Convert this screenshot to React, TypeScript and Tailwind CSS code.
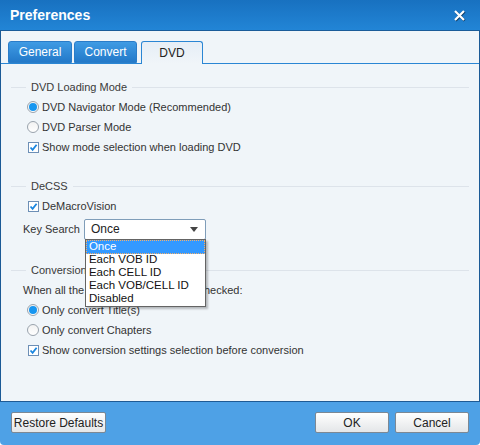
import { ReactNode } from "react";

function GroupHeader({ title }: { title: string }) {
  return (
    <div className="flex h-[20px] items-center pl-[10px] pr-[10px]">
      <div className="h-px w-[15px] bg-[#dde3ea]" />
      <span className="px-[5px] text-[#3a3a3a]">{title}</span>
      <div className="h-px flex-1 bg-[#dde3ea]" />
    </div>
  );
}

function Radio({ checked, children }: { checked?: boolean; children: ReactNode }) {
  return (
    <div className="flex h-[20px] items-center pl-[26px]">
      <span className="flex h-[12px] w-[12px] items-center justify-center rounded-full border border-[#9aa3ad] bg-gradient-to-b from-[#f2f2f2] to-white">
        {checked && <span className="h-[8px] w-[8px] rounded-full bg-[#1796f0]" />}
      </span>
      <span className="ml-[3px]">{children}</span>
    </div>
  );
}

function Check({ children }: { children: ReactNode }) {
  return (
    <div className="flex h-[20px] items-center pl-[27px]">
      <span className="flex h-[11px] w-[11px] items-center justify-center border border-[#6d8fb6] bg-white">
        <svg width="9" height="9" viewBox="0 0 9 9">
          <path d="M1.5 4.5 L3.6 6.8 L7.6 1.8" fill="none" stroke="#1a86e0" strokeWidth="1.8" />
        </svg>
      </span>
      <span className="ml-[3px]">{children}</span>
    </div>
  );
}

function Button({ children, className }: { children: ReactNode; className: string }) {
  return (
    <div
      className={`flex h-[21px] items-center justify-center rounded-[2px] border border-[#7c8894] bg-gradient-to-b from-white to-[#e4e6e8] text-[12px] text-[#222] ${className}`}
    >
      {children}
    </div>
  );
}

export default function App() {
  return (
    <div
      className="flex h-[445px] w-[480px] flex-col overflow-hidden text-[11px] text-[#333]"
      style={{ fontFamily: '"Liberation Sans", Arial, sans-serif' }}
    >
      {/* Title bar */}
      <div className="flex h-[31px] items-center justify-between border-b border-[#1a5c99] bg-gradient-to-b from-[#1871c0] to-[#2285d6] pl-[10px] pr-[14px]">
        <span className="text-[14px] font-bold text-white">Preferences</span>
        <svg width="13" height="13" viewBox="0 0 13 13">
          <path d="M2 2 L11 11 M11 2 L2 11" stroke="#0c3b66" strokeWidth="2.6" transform="translate(0.6 0.6)" />
          <path d="M2 2 L11 11 M11 2 L2 11" stroke="white" strokeWidth="2.2" />
        </svg>
      </div>

      {/* Body */}
      <div className="flex flex-1 flex-col border-x border-[#1b5a96] bg-[#f0f5f9]">
        {/* Tabs */}
        <div className="flex items-end border-b border-[#2a86d4] pl-[7px] pt-[10px] text-[12px]">
          <div className="flex h-[22px] w-[64px] items-center justify-center rounded-t-[3px] border border-[#2a7cc8] bg-gradient-to-b from-[#3f9be4] to-[#2379c9] text-white">
            General
          </div>
          <div className="ml-[2px] flex h-[22px] w-[63px] items-center justify-center rounded-t-[3px] border border-[#2a7cc8] bg-gradient-to-b from-[#3f9be4] to-[#2379c9] text-white">
            Convert
          </div>
          <div className="-mb-px ml-[4px] flex h-[23px] w-[62px] items-center justify-center rounded-t-[3px] border border-b-0 border-[#2a86d4] bg-gradient-to-b from-[#e6eef6] to-[#f0f5f9] text-[#222]">
            DVD
          </div>
        </div>

        {/* Content */}
        <div className="flex flex-1 flex-col pt-[13px]">
          <GroupHeader title="DVD Loading Mode" />
          <Radio checked>DVD Navigator Mode (Recommended)</Radio>
          <Radio>DVD Parser Mode</Radio>
          <Check>Show mode selection when loading DVD</Check>

          <div className="mt-[19px]">
            <GroupHeader title="DeCSS" />
          </div>
          <Check>DeMacroVision</Check>
          <div className="mt-[3px] flex h-[20px] items-center pl-[22px]">
            <span>Key Search</span>
            <div className="relative ml-[4px]">
              <div className="flex h-[21px] w-[122px] items-center justify-between rounded-[2px] border border-[#7f9db9] bg-white pl-[6px] pr-[7px] text-[12px] text-[#222]">
                <span>Once</span>
                <svg width="8" height="5" viewBox="0 0 8 5">
                  <path d="M0 0 L8 0 L4 5 Z" fill="#444" />
                </svg>
              </div>
              <div className="absolute left-px top-[20px] z-10 w-[121px] border border-[#646464] bg-white text-[11.5px] text-[#111] shadow-[2px_2px_2px_rgba(0,0,0,0.25)]">
                <div className="flex h-[14px] items-center border border-dotted border-[#f5b06a] bg-[#3399ff] pl-[2px] text-white">
                  Once
                </div>
                <div className="flex h-[13px] items-center pl-[3px]">Each VOB ID</div>
                <div className="flex h-[13px] items-center pl-[3px]">Each CELL ID</div>
                <div className="flex h-[13px] items-center pl-[3px]">Each VOB/CELL ID</div>
                <div className="flex h-[13px] items-center pl-[3px]">Disabled</div>
              </div>
            </div>
          </div>

          <div className="mt-[21px]">
            <GroupHeader title="Conversion Settings" />
          </div>
          <div className="flex h-[20px] items-center pl-[22px]">
            When all the titles and chapters are checked:
          </div>
          <Radio checked>Only convert Title(s)</Radio>
          <Radio>Only convert Chapters</Radio>
          <Check>Show conversion settings selection before conversion</Check>
        </div>
      </div>

      {/* Bottom bar */}
      <div className="flex h-[44px] items-center justify-between rounded-b-[4px] border-t border-[#1f5a94] bg-[#4ea1e6] px-[11px] pb-[2px]">
        <Button className="w-[95px]">Restore Defaults</Button>
        <div className="flex gap-[6px]">
          <Button className="w-[74px]">OK</Button>
          <Button className="w-[74px]">Cancel</Button>
        </div>
      </div>
    </div>
  );
}
